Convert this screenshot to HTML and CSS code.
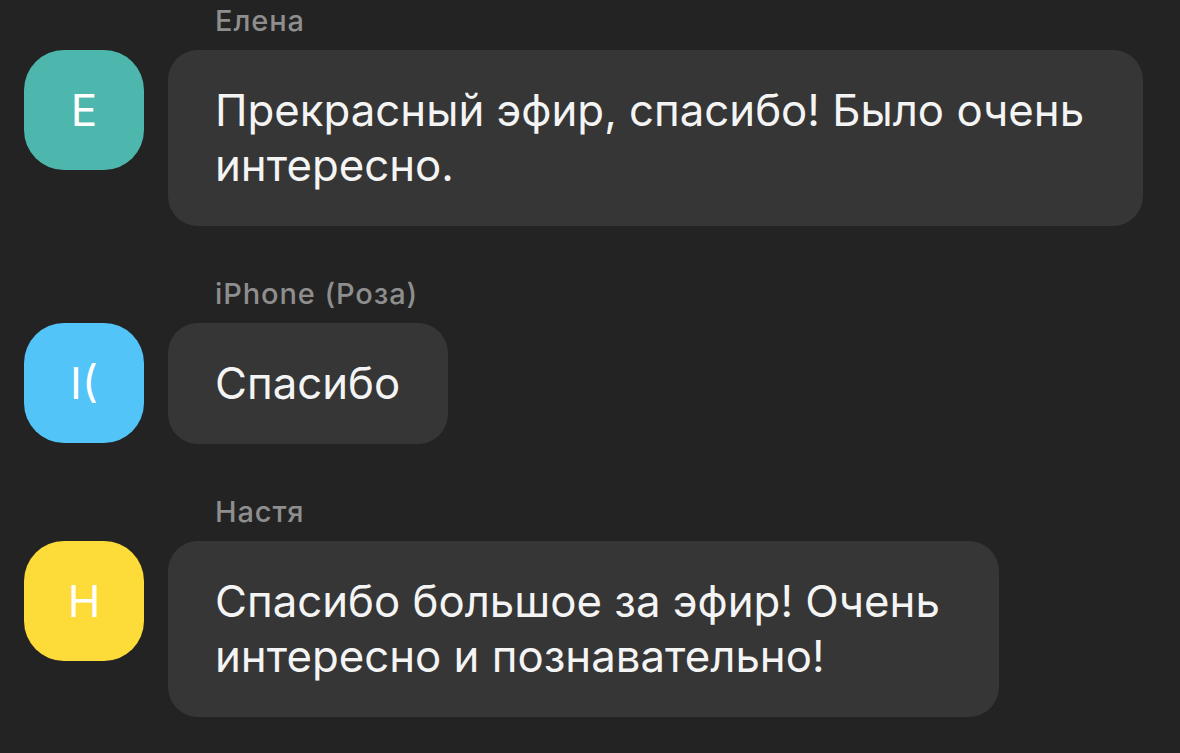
FILE: index.html
```html
<!DOCTYPE html>
<html lang="ru">

<head>
  <meta charset="UTF-8">
  <meta name="viewport" content="width=device-width, initial-scale=1.0">
  <title>Чат</title>
  <link rel="stylesheet" href="styles.css">
</head>

<body>
  <main class="chat">
    <article class="message">
      <p class="name">Елена</p>
      <div class="avatar avatar-teal">Е</div>
      <p class="bubble bubble-long">Прекрасный эфир, спасибо! Было очень<br>интересно.</p>
    </article>

    <article class="message">
      <p class="name">iPhone (Роза)</p>
      <div class="avatar avatar-blue">I(</div>
      <p class="bubble">Спасибо</p>
    </article>

    <article class="message">
      <p class="name">Настя</p>
      <div class="avatar avatar-yellow">Н</div>
      <p class="bubble bubble-long">Спасибо большое за эфир! Очень<br>интересно и познавательно!</p>
    </article>
  </main>
</body>

</html>
```

FILE: styles.css
```css
/* Globals */
* {
  box-sizing: border-box;
  margin: 0;
}

body {
  font-family: Inter, 'Noto Sans', sans-serif;
  background: #232323;
  color: #f4f4f4;
  min-block-size: 100vh;
}

/* Chat layout */
.chat {
  display: flex;
  flex-direction: column;
  gap: 50px;
  padding: 3px 38px 0 24px;
}

.message {
  display: grid;
  grid-template-columns: 120px auto;
  column-gap: 24px;
  justify-content: start;
  align-items: start;
}

.name {
  grid-column: 2;
  padding-inline-start: 47px;
  margin-block-end: 11px;
  font-size: 29px;
  font-weight: 500;
  letter-spacing: 0.9px;
  line-height: 36px;
  color: #8e8e8e;
}

/* Avatars */
.avatar {
  grid-column: 1;
  grid-row: 2;
  inline-size: 120px;
  block-size: 120px;
  border-radius: 40px;
  display: flex;
  align-items: center;
  justify-content: center;
  font-size: 44px;
  color: #fff;
}

.avatar-teal {
  background: #4db7ae;
}

.avatar-blue {
  background: #52c4f8;
}

.avatar-yellow {
  background: #fddb38;
}

/* Bubbles */
.bubble {
  grid-column: 2;
  grid-row: 2;
  justify-self: start;
  padding: 33px 48px 33px 47px;
  border-radius: 30px;
  background: #363636;
  font-size: 43.75px;
  line-height: 55px;
  white-space: nowrap;
}

.bubble-long {
  padding-inline-end: 59px;
}
```
